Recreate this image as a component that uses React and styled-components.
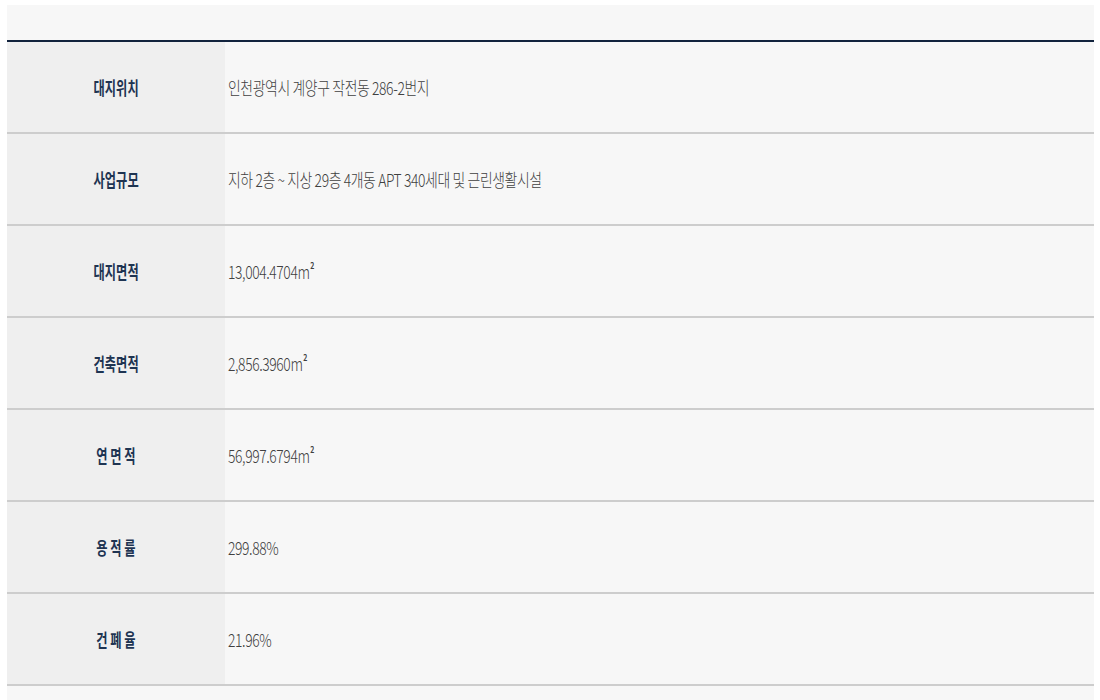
import React from "react";
import styled, { createGlobalStyle } from "styled-components";

const Global = createGlobalStyle`
  html, body { margin: 0; padding: 0; background: #ffffff; }
  body { font-family: "Noto Sans CJK KR", "Noto Sans", sans-serif; }
`;

const Page = styled.div`
  margin: 5px 6px 0 7px;
  height: 695px;
  background: #f7f7f7;
  padding-top: 35px;
  box-sizing: border-box;
  overflow: hidden;
`;

const Table = styled.div`
  border-top: 2px solid #12233d;
  box-shadow: 0 1px 0 #9fb3cc inset;
`;

const Row = styled.div`
  display: grid;
  grid-template-columns: 218px 1fr;
  height: 92px;
  border-bottom: 2px solid #cdcdcd;
  box-sizing: border-box;
`;

const Label = styled.div`
  background: #efefef;
  display: flex;
  align-items: center;
  justify-content: center;
`;

const LabelText = styled.span`
  display: inline-block;
  font-size: 18px;
  font-weight: 700;
  color: #1e3452;
  transform: scaleX(0.68);
  white-space: pre;
`;

const Value = styled.div`
  background: #f7f7f7;
  display: flex;
  align-items: center;
  padding-left: 3px;
`;

const ValueText = styled.span`
  display: inline-block;
  font-size: 18px;
  font-weight: 300;
  color: #404040;
  letter-spacing: -0.5px;
  transform: scaleX(0.77);
  transform-origin: left center;
  white-space: nowrap;
  sup {
    font-size: 9px;
    font-weight: 700;
    vertical-align: 10px;
    margin-left: 1px;
  }
`;

const rows = [
  { label: "대지위치", value: "인천광역시 계양구 작전동 286-2번지" },
  { label: "사업규모", value: "지하 2층 ~ 지상 29층 4개동 APT 340세대 및 근린생활시설" },
  { label: "대지면적", value: "13,004.4704m", sq: true },
  { label: "건축면적", value: "2,856.3960m", sq: true },
  { label: "연 면 적", value: "56,997.6794m", sq: true },
  { label: "용 적 률", value: "299.88%" },
  { label: "건 폐 율", value: "21.96%" },
];

export default function App() {
  return (
    <>
      <Global />
      <Page>
        <Table>
          {rows.map((r) => (
            <Row key={r.label}>
              <Label>
                <LabelText>{r.label}</LabelText>
              </Label>
              <Value>
                <ValueText>
                  {r.value}
                  {r.sq && <sup>2</sup>}
                </ValueText>
              </Value>
            </Row>
          ))}
        </Table>
      </Page>
    </>
  );
}
